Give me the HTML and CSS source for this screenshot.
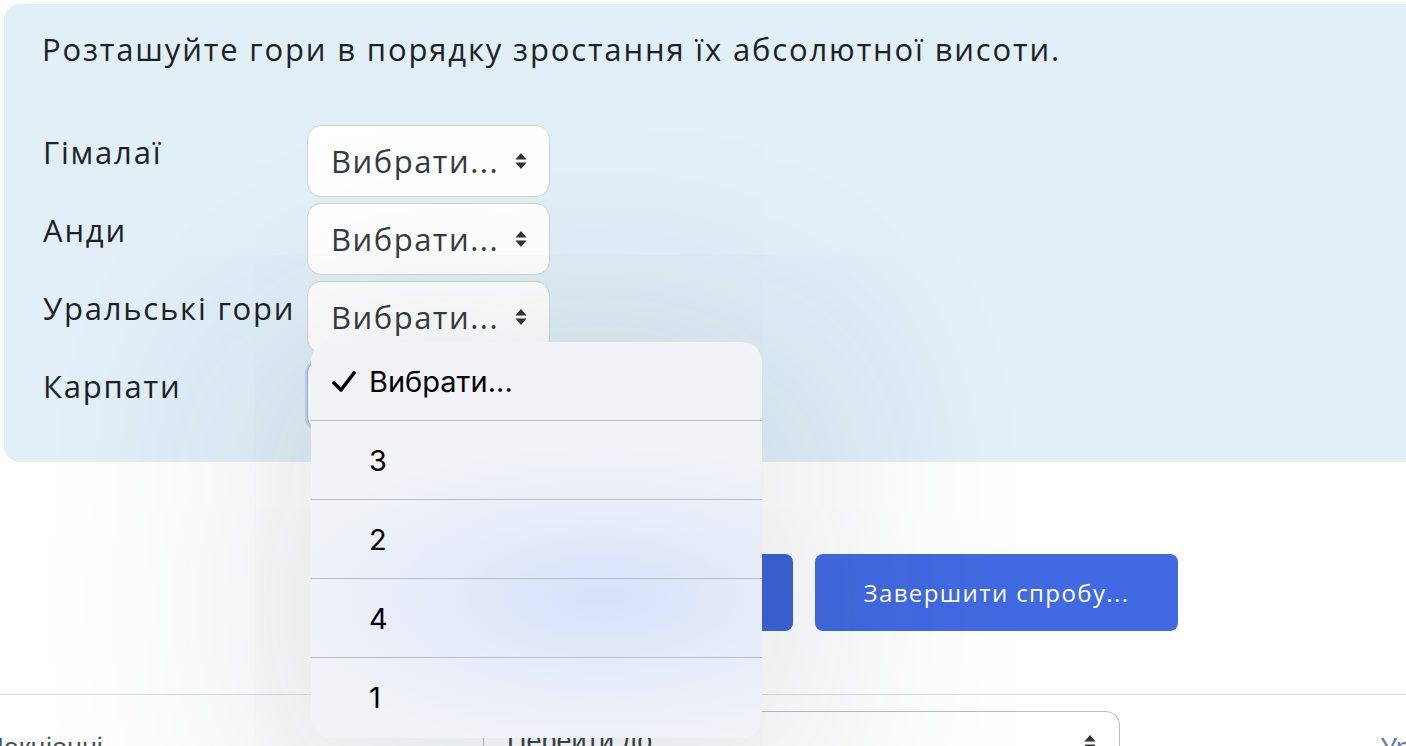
FILE: index.html
```html
<!DOCTYPE html>
<html lang="uk">
<head>
<meta charset="utf-8">
<title>Тест</title>
<link rel="stylesheet" href="styles.css">
</head>
<body>
<div class="page">
  <section class="card">
    <p class="question">Розташуйте гори в порядку зростання їх абсолютної висоти.</p>
    <div class="matches">
      <div class="label">Гімалаї</div>
      <div class="select"><span>Вибрати...</span><svg class="arrows" viewBox="0 0 12 18" width="12" height="18"><path d="M6 1 L11.5 7.5 H0.5 Z M6 17 L11.5 10.5 H0.5 Z" fill="#333"/></svg></div>
      <div class="label">Анди</div>
      <div class="select"><span>Вибрати...</span><svg class="arrows" viewBox="0 0 12 18" width="12" height="18"><path d="M6 1 L11.5 7.5 H0.5 Z M6 17 L11.5 10.5 H0.5 Z" fill="#333"/></svg></div>
      <div class="label">Уральські гори</div>
      <div class="select"><span>Вибрати...</span><svg class="arrows" viewBox="0 0 12 18" width="12" height="18"><path d="M6 1 L11.5 7.5 H0.5 Z M6 17 L11.5 10.5 H0.5 Z" fill="#333"/></svg></div>
      <div class="label">Карпати</div>
      <div class="select select-focus"><span>Вибрати...</span><svg class="arrows" viewBox="0 0 12 18" width="12" height="18"><path d="M6 1 L11.5 7.5 H0.5 Z M6 17 L11.5 10.5 H0.5 Z" fill="#333"/></svg></div>
    </div>
  </section>

  <div class="actions">
    <button class="btn btn-prev">Попередня сторінка</button>
    <button class="btn btn-finish">Завершити спробу...</button>
  </div>

  <hr class="divider">

  <nav class="footer">
    <a class="prev-link">Лекціонні</a>
    <div class="jump"><span>Перейти до...</span><svg class="arrows" viewBox="0 0 12 18" width="12" height="18"><path d="M6 1 L11.5 7.5 H0.5 Z M6 17 L11.5 10.5 H0.5 Z" fill="#333"/></svg></div>
    <a class="next-link">Уроки</a>
  </nav>

  <div class="popup">
    <div class="option selected"><svg class="check" viewBox="0 0 24 22" width="24" height="22"><path d="M2 12 L9 19 L22 2" fill="none" stroke="#000" stroke-width="3.6" stroke-linecap="round" stroke-linejoin="round"/></svg><span>Вибрати...</span></div>
    <div class="option"><span>3</span></div>
    <div class="option"><span>2</span></div>
    <div class="option"><span>4</span></div>
    <div class="option"><span>1</span></div>
  </div>
</div>
</body>
</html>
```

FILE: styles.css
```css
html, body {
  margin: 0;
  padding: 0;
  background: #ffffff;
  overflow: hidden;
  width: 1406px;
  height: 746px;
}

.page {
  position: relative;
  width: 1406px;
  height: 746px;
  overflow: hidden;
  font-family: "Open Sans", "Noto Sans", sans-serif;
  color: #1d2125;
}

.card {
  margin: 4px -30px 0 4px;
  height: 458px;
  box-sizing: border-box;
  padding: 22px 0 0 38px;
  background: #e1eff7;
  border-radius: 16px;
}

.question {
  margin: 0;
  font-size: 31px;
  line-height: 46px;
  font-weight: 400;
  letter-spacing: 1.85px;
}

.matches {
  margin-top: 53px;
  display: grid;
  grid-template-columns: 265px 243px;
  row-gap: 6px;
}

.label {
  font-size: 31px;
  line-height: 46px;
  padding-top: 4px;
  padding-left: 1px;
  white-space: nowrap;
  letter-spacing: 1.8px;
}

.select {
  box-sizing: border-box;
  height: 72px;
  display: flex;
  align-items: center;
  justify-content: space-between;
  padding: 0 22px 0 23px;
  background: #ffffff;
  border: 1.5px solid #cfd3d6;
  border-radius: 14px;
  font-size: 31px;
  color: #343a40;
  letter-spacing: 1.5px;
}

.select-focus {
  border-color: #9fb0ee;
  box-shadow: 0 0 0 2px rgba(120, 140, 230, 0.25);
}

.actions {
  display: flex;
  gap: 22px;
  margin-top: 92px;
  padding-left: 540px;
}

.btn {
  flex-shrink: 0;
  height: 77px;
  border: 0;
  border-radius: 8px;
  background: #4169e1;
  color: #ffffff;
  font-family: "Open Sans", "Noto Sans", sans-serif;
  font-size: 24px;
  letter-spacing: 1.4px;
  padding: 0;
}

.btn-prev {
  width: 253px;
  background: #3a61d6;
}

.btn-finish {
  width: 363px;
}

.divider {
  margin: 63px 0 0 0;
  border: 0;
  border-top: 1.5px solid #dcdee1;
}

.footer {
  display: flex;
  align-items: flex-start;
  margin-top: 16px;
  font-family: "Liberation Sans", Arial, sans-serif;
  font-size: 27px;
}

.prev-link {
  flex: 0 0 497px;
  margin-top: 22px;
  margin-left: -14px;
  color: #4a4f55;
  white-space: nowrap;
}

.jump {
  flex: 0 0 637px;
  box-sizing: border-box;
  height: 70px;
  display: flex;
  justify-content: space-between;
  padding: 14px 23px 0 23px;
  border: 1.5px solid #b9bdc1;
  border-radius: 14px;
  color: #3a3f44;
}

.jump .arrows {
  margin-top: 8px;
}

.next-link {
  flex-shrink: 0;
  margin-left: 260px;
  margin-top: 22px;
  color: #5f7fb8;
  white-space: nowrap;
}

.popup {
  position: absolute;
  left: 311px;
  top: 342px;
  width: 451px;
  height: 396px;
  border-radius: 20px;
  overflow: hidden;
  background:
    radial-gradient(ellipse 330px 150px at 290px 255px, rgba(214, 225, 250, 1) 0%, rgba(224, 232, 250, 0.7) 50%, rgba(241, 243, 246, 0) 100%),
    #f1f3f6;
  box-shadow: 0 40px 220px 60px rgba(40, 60, 70, 0.13);
  font-family: Inter, "Noto Sans", sans-serif;
  color: #000;
  display: flex;
  flex-direction: column;
}

.option {
  flex: 0 0 78px;
  display: flex;
  align-items: center;
  padding-left: 58px;
  font-size: 29px;
  border-bottom: 1.2px solid #b7bcc5;
  position: relative;
}

.option:last-child {
  border-bottom: 0;
}

.check {
  position: absolute;
  left: 21px;
  top: 29px;
}
```
